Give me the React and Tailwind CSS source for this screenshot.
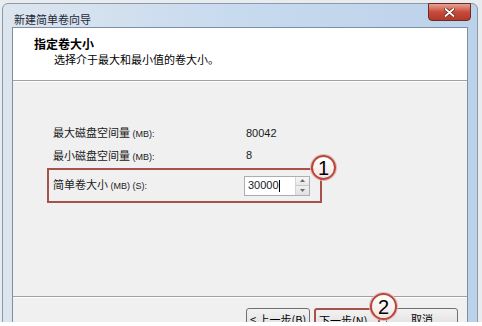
import React from 'react'

const cjk = { fontFamily: '"Noto Sans CJK SC", "Noto Sans", sans-serif' }
const latin = { fontFamily: '"Liberation Sans", "Noto Sans CJK SC", sans-serif' }

function Marker({ n, className }) {
  return (
    <div
      className={`absolute rounded-full border-2 border-[#b5473d] bg-gradient-to-b from-white to-[#f3e6e4] flex items-center justify-center shadow-[0_0_0_1px_#e7b9b3] ${className}`}
    >
      <span className="text-[20px] leading-none text-black" style={latin}>
        {n}
      </span>
    </div>
  )
}

function WinButton({ children, className = '' }) {
  return (
    <div
      className={`h-[23px] rounded-[3px] border border-[#707070] bg-gradient-to-b from-[#f2f2f2] to-[#dddddd] flex items-start justify-center pt-[2px] text-[11px] text-black ${className}`}
      style={cjk}
    >
      {children}
    </div>
  )
}

export default function App() {
  return (
    <div className="w-[482px] h-[326px] bg-white overflow-hidden">
      <div className="h-[322px] bg-[#e9ecef] pt-[3px] pl-[2px] pr-[4px] overflow-hidden">
        {/* window */}
        <div className="h-[330px] rounded-t-[6px] border border-[#8a9aab] bg-gradient-to-r from-[#dce5ee] via-[#c7daee] to-[#bcd2ea] flex flex-col">
          {/* title bar */}
          <div className="h-[26px] flex justify-between">
            <div className="pl-[11px] pt-[8px] text-[11px] leading-[14px] text-[#1e2a38]" style={cjk}>
              新建简单卷向导
            </div>
            <div className="mr-[6px] -mt-px w-[43px] h-[18px] rounded-b-[4px] border border-[#6d2a22] bg-gradient-to-b from-[#e6a295] via-[#c9493a] to-[#b03a2a] flex items-center justify-center">
              <svg width="11" height="9" viewBox="0 0 11 9">
                <path d="M1.5 1 L9.5 8 M9.5 1 L1.5 8" stroke="#5a1f18" strokeWidth="3.2" strokeLinecap="round" />
                <path d="M1.5 1 L9.5 8 M9.5 1 L1.5 8" stroke="#ffffff" strokeWidth="1.8" strokeLinecap="round" />
              </svg>
            </div>
          </div>
          {/* client */}
          <div className="mx-[9px] flex-1 border border-[#7d8fa5] flex flex-col" style={cjk}>
            <div className="h-[53px] bg-white border-b border-[#a0a0a0] pl-[21px] pt-[9px]">
              <div className="text-[12px] leading-[14px] font-bold text-black">指定卷大小</div>
              <div className="pl-[20px] mt-[1px] text-[11px] leading-[14px] text-black">
                选择介于最大和最小值的卷大小。
              </div>
            </div>
            <div className="h-[215px] bg-[#f0f0f0] border-t border-white pl-[34px] pt-[41px] text-[11px] text-[#1a1a1a]">
              <div className="h-[20px] pl-[6px] flex items-center">
                <span className="w-[193px]">
                  最大磁盘空间量<span className="text-[9px]" style={latin}> (MB):</span>
                </span>
                <span style={latin}>80042</span>
              </div>
              <div className="h-[25px] pl-[6px] flex items-center">
                <span className="w-[193px]">
                  最小磁盘空间量<span className="text-[9px]" style={latin}> (MB):</span>
                </span>
                <span style={latin}>8</span>
              </div>
              <div className="relative w-[275px] h-[35px] border-2 border-[#a8514a] pl-[4px] flex items-center">
                <span className="w-[191px] -mt-[2px]">
                  简单卷大小<span className="text-[9px]" style={latin}> (MB) (S):</span>
                </span>
                <div className="w-[66px] h-[20px] border border-[#abadb3] bg-white flex">
                  <div className="flex-1 flex items-center pl-[3px] text-[11px]" style={latin}>
                    30000<span className="w-px h-[12px] bg-black"></span>
                  </div>
                  <div className="w-[14px] flex flex-col border-l border-[#d5d5d5]">
                    <div className="flex-1 bg-gradient-to-b from-[#f8f8f8] to-[#e6e6e6] border-b border-[#c9c9c9] flex items-center justify-center">
                      <svg width="5" height="3" viewBox="0 0 5 3"><path d="M0 3 L2.5 0 L5 3 Z" fill="#6b6b6b" /></svg>
                    </div>
                    <div className="flex-1 bg-gradient-to-b from-[#f0f0f0] to-[#e0e0e0] flex items-center justify-center">
                      <svg width="5" height="3" viewBox="0 0 5 3"><path d="M0 0 L2.5 3 L5 0 Z" fill="#6b6b6b" /></svg>
                    </div>
                  </div>
                </div>
                <Marker n="1" className="left-[262px] -top-[15px] w-[25px] h-[25px]" />
              </div>
            </div>
            <div className="flex-1 bg-[#f0f0f0] border-t border-[#a0a0a0] relative">
              <div className="border-t border-white pt-[10px] pr-[9px] flex justify-end">
                <WinButton className="w-[64px]">&lt; 上一步(B)</WinButton>
                <WinButton className="ml-[4px] w-[66px] border-2 border-[#a8514a] justify-start pl-[3px]">下一步(N)</WinButton>
                <WinButton className="ml-[6px] w-[72px]">取消</WinButton>
              </div>
              <Marker n="2" className="left-[357px] top-[-4px] w-[27px] h-[27px]" />
            </div>
          </div>
        </div>
      </div>
    </div>
  )
}
